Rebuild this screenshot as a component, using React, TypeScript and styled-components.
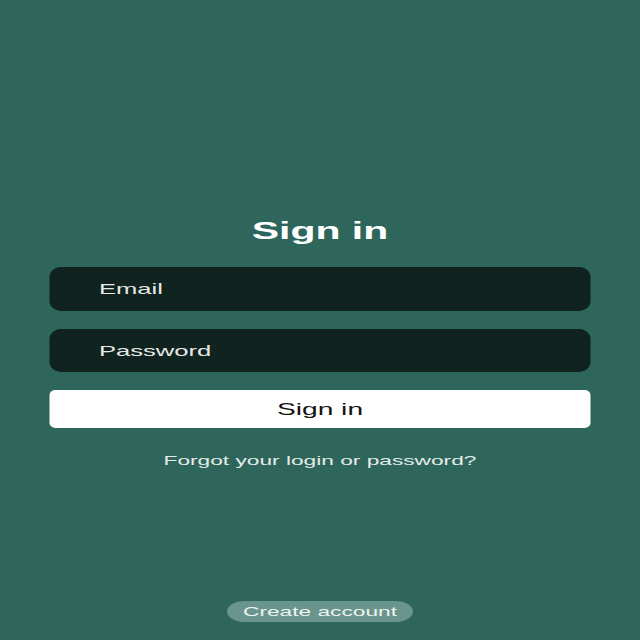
import React from "react";
import styled, { createGlobalStyle } from "styled-components";

const GlobalStyle = createGlobalStyle`
  html, body {
    margin: 0;
    padding: 0;
    background: #2f665b;
    overflow: hidden;
  }
  body {
    font-family: "Liberation Sans", Arial, sans-serif;
  }
  * { box-sizing: border-box; }
`;

/* The design is a 375px-wide mobile layout shown stretched across the 640px frame. */
const Viewport = styled.div`
  width: 640px;
  height: 640px;
  background: #2f665b;
  overflow: hidden;
`;

const Screen = styled.main`
  width: 375px;
  height: 640px;
  transform: scaleX(1.70667);
  transform-origin: 0 0;
  display: flex;
  flex-direction: column;
  padding: 216px 28.7px 18px;
`;

const Title = styled.h1`
  margin: 0;
  font-size: 24px;
  line-height: 29px;
  font-weight: 700;
  text-align: center;
  color: #ffffff;
`;

const Form = styled.form`
  margin-top: 22px;
  display: flex;
  flex-direction: column;
  gap: 18px;
`;

const Field = styled.input`
  height: 43.5px;
  width: 100%;
  border: none;
  outline: none;
  border-radius: 6.5px / 10px;
  background: #10231f;
  padding: 0 0 0 29.3px;
  font-family: inherit;
  font-size: 15px;
  color: #ffffff;
  &::placeholder {
    color: #e6e9e8;
    opacity: 1;
  }
`;

const SubmitButton = styled.button`
  height: 38px;
  width: 100%;
  border: none;
  border-radius: 3.5px / 5px;
  background: #ffffff;
  color: #141414;
  font-family: inherit;
  font-size: 16.5px;
  padding-bottom: 1px;
  cursor: pointer;
`;

const ForgotLink = styled.a`
  margin-top: 25px;
  align-self: center;
  font-size: 13.3px;
  line-height: 16px;
  color: #e4ecea;
  text-decoration: none;
  cursor: pointer;
`;

const Spacer = styled.div`
  flex: 1;
`;

const CreatePill = styled.button`
  align-self: center;
  height: 21px;
  padding: 0 9.5px;
  border: none;
  border-radius: 10.5px;
  background: #6a958c;
  color: #eef3f1;
  font-family: inherit;
  font-size: 13.3px;
  line-height: 21px;
  cursor: pointer;
`;

export default function App() {
  return (
    <>
      <GlobalStyle />
      <Viewport>
        <Screen>
          <Title>Sign in</Title>
          <Form onSubmit={(e) => e.preventDefault()}>
            <Field type="email" placeholder="Email" />
            <Field type="password" placeholder="Password" />
            <SubmitButton type="submit">Sign in</SubmitButton>
          </Form>
          <ForgotLink>Forgot your login or password?</ForgotLink>
          <Spacer />
          <CreatePill type="button">Create account</CreatePill>
        </Screen>
      </Viewport>
    </>
  );
}
